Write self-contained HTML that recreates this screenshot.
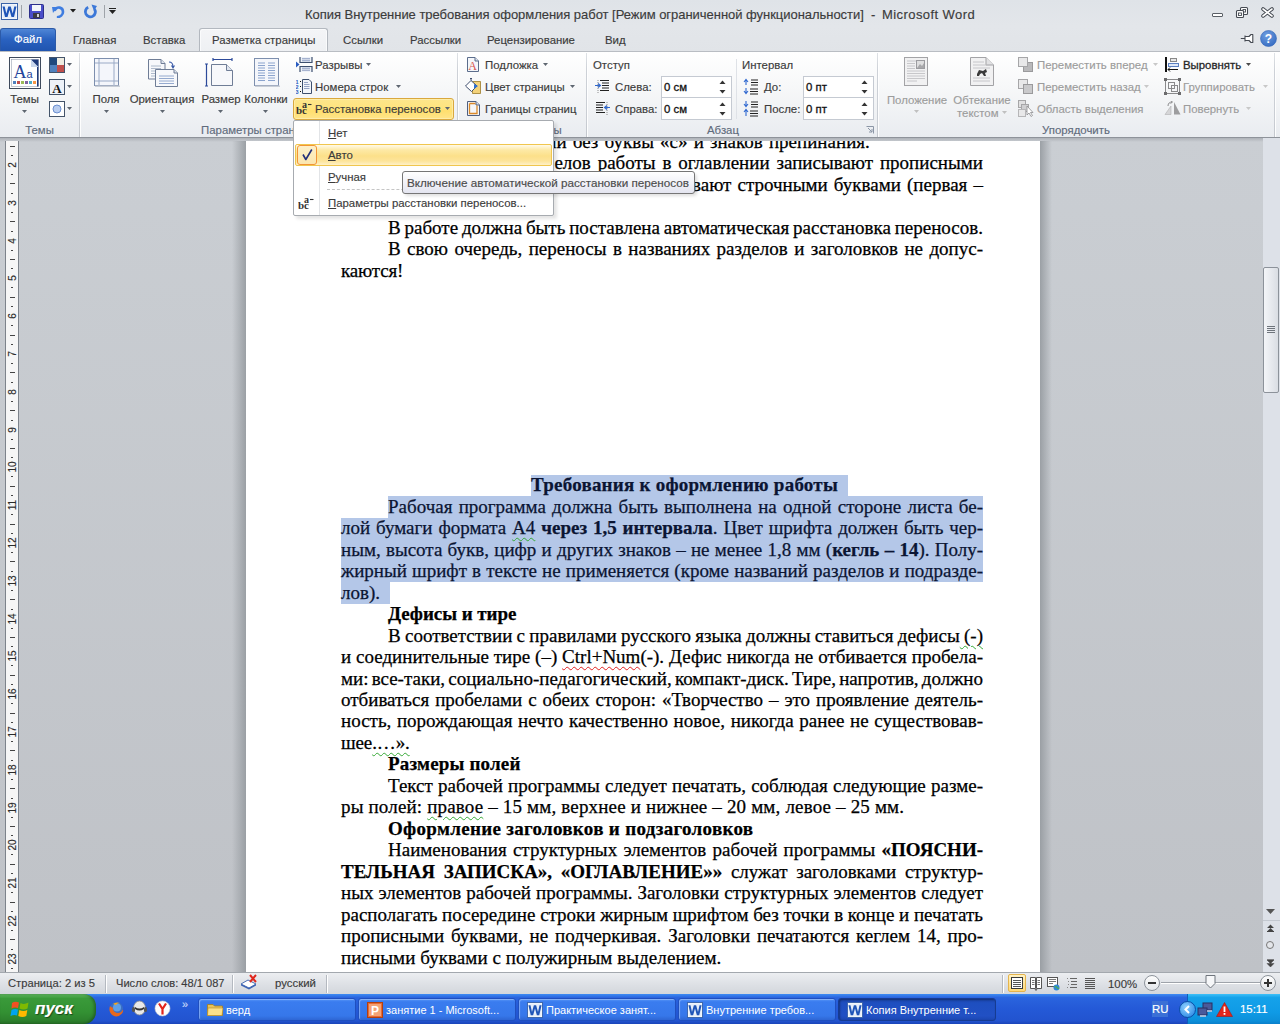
<!DOCTYPE html>
<html><head><meta charset="utf-8">
<style>
*{margin:0;padding:0;box-sizing:border-box}
html,body{width:1280px;height:1024px;overflow:hidden}
body{position:relative;font-family:"Liberation Sans",sans-serif;font-size:12px;color:#3c3c3c;background:#c6c9ce}
.a{position:absolute}
.ui{font-family:"Liberation Sans",sans-serif;white-space:nowrap;-webkit-text-stroke:0.15px currentColor}
.doc{font-family:"Liberation Serif",serif;font-size:19px;color:#000;-webkit-text-stroke:0.25px currentColor;white-space:nowrap}
.ln{position:absolute;height:21.5px;line-height:21.5px;white-space:nowrap;text-align:justify;text-align-last:justify}
u.g{text-decoration:underline wavy #35a935;text-decoration-thickness:1px;text-underline-offset:2.5px}
u.r{text-decoration:underline wavy #e02020;text-decoration-thickness:1px;text-underline-offset:2.5px}
.j{text-align:justify;text-align-last:justify}
.i{padding-left:47px}
b{font-weight:bold}
.sel{background:#b4c7e8}
</style></head><body>

<!-- ============ TITLE BAR + TABS ============ -->
<div class="a" style="left:0;top:0;width:1280px;height:52px;background:linear-gradient(#dfe3e8,#e3e6ea 50%,#e1e4e8)"></div>
<div id="titlebar">
<!-- word icon -->
<svg class="a" style="left:1px;top:3px" width="17" height="17" viewBox="0 0 17 17">
 <rect x="0.5" y="0.5" width="16" height="16" fill="#fff" stroke="#3a63a8"/>
 <rect x="1.5" y="1.5" width="14" height="14" fill="#e6eef9"/>
 <path d="M1.5 3.5L4 14H6.5L8.5 7L10.5 14H13L15.5 3.5H13.3L11.7 10.5L9.7 3.5H7.3L5.3 10.5L3.7 3.5Z" fill="#1f55b8"/>
</svg>
<div class="a" style="left:21px;top:5px;width:1px;height:13px;background:#9ea3a9"></div>
<!-- save -->
<svg class="a" style="left:29px;top:4px" width="15" height="15" viewBox="0 0 15 15">
 <rect x="0.5" y="0.5" width="14" height="14" rx="1" fill="#4a4ec9" stroke="#2d2f8a"/>
 <rect x="3" y="1" width="9" height="6" fill="#f4f6fa"/>
 <rect x="4" y="9" width="7" height="5" fill="#3b3b44"/>
 <rect x="8" y="10" width="2" height="3" fill="#d0d0d8"/>
</svg>
<!-- undo -->
<svg class="a" style="left:51px;top:4px" width="14" height="14" viewBox="0 0 14 14">
 <path d="M4 6 C6 2,12 3,12 8 C12 11,9 13,7 13" fill="none" stroke="#3f7de0" stroke-width="2.6" stroke-linecap="round"/>
 <path d="M1 3 L6 3 L2 9 Z" fill="#3f7de0"/>
</svg>
<svg class="a" style="left:70px;top:9px" width="6" height="4"><path d="M0 0H6L3 3.5Z" fill="#1e1e1e"/></svg>
<!-- redo -->
<svg class="a" style="left:83px;top:4px" width="15" height="15" viewBox="0 0 15 15">
 <path d="M5.2 3.3 A5 5 0 1 0 11.5 5" fill="none" stroke="#3c78d8" stroke-width="2.8"/>
 <path d="M8.5 0.5 L14 2 L11 7 Z" fill="#3c78d8"/>
</svg>
<div class="a" style="left:104px;top:5px;width:1px;height:13px;background:#9ea3a9"></div>
<div class="a" style="left:109px;top:8px;width:7px;height:1px;background:#222"></div>
<svg class="a" style="left:109px;top:10px" width="7" height="5"><path d="M0 0H7L3.5 4Z" fill="#222"/></svg>
<div class="a ui" style="left:305px;top:7px;font-size:13px;color:#3b3b3b;letter-spacing:-0.035px">Копия Внутренние требования оформления работ [Режим ограниченной функциональности]</div>
<div class="a ui" style="left:871px;top:7px;font-size:13px;color:#3b3b3b">-</div>
<div class="a ui" style="left:882px;top:7px;font-size:13px;color:#3b3b3b;letter-spacing:0.42px">Microsoft Word</div>
<!-- window controls -->
<div class="a" style="left:1212px;top:13px;width:11px;height:4px;border:1px solid #5a5f66;border-radius:1px;background:#fff"></div>
<svg class="a" style="left:1235px;top:6px" width="14" height="13" viewBox="0 0 14 13">
 <rect x="5.5" y="1.5" width="7" height="7" rx="1" fill="#fff" stroke="#454a52" stroke-width="1.1"/><rect x="8" y="3.5" width="2.5" height="2.5" fill="none" stroke="#454a52" stroke-width="0.9"/>
 <rect x="1.5" y="4.5" width="7" height="7" rx="1" fill="#fff" stroke="#454a52" stroke-width="1.1"/><rect x="3.5" y="7" width="3" height="2.5" fill="none" stroke="#454a52" stroke-width="0.9"/>
</svg>
<svg class="a" style="left:1261px;top:7px" width="13" height="11" viewBox="0 0 13 11">
 <path d="M2 2 L11 9 M11 2 L2 9" stroke="#454a52" stroke-width="3.6" stroke-linecap="round"/>
 <path d="M2 2 L11 9 M11 2 L2 9" stroke="#fff" stroke-width="1.6" stroke-linecap="round"/>
</svg>
<!-- tabs -->
<div class="a" style="left:0;top:28px;width:56px;height:24px;border-radius:3px 3px 0 0;background:linear-gradient(#4f86d6,#2a62c0 45%,#1f53ad);border:1px solid #2c5aa8;border-bottom:none"></div>
<div class="a ui" style="left:0;top:33px;width:56px;text-align:center;color:#fff;font-size:11.4px">Файл</div>
<div class="a" style="left:199px;top:28px;width:129px;height:24px;border:1px solid #b3b8bf;border-bottom:none;border-radius:3px 3px 0 0;background:linear-gradient(#f4f5f7,#eef0f3);box-shadow:inset 1px 1px 0 #fafbfc,inset -1px 0 0 #fafbfc"></div>
<div class="a ui" style="left:73px;top:34px;color:#3b3b3b;font-size:11.4px">Главная</div>
<div class="a ui" style="left:143px;top:34px;color:#3b3b3b;font-size:11.4px">Вставка</div>
<div class="a ui" style="left:212px;top:34px;color:#3b3b3b;font-size:11.4px">Разметка страницы</div>
<div class="a ui" style="left:343px;top:34px;color:#3b3b3b;font-size:11.4px">Ссылки</div>
<div class="a ui" style="left:410px;top:34px;color:#3b3b3b;font-size:11.4px">Рассылки</div>
<div class="a ui" style="left:487px;top:34px;color:#3b3b3b;font-size:11.4px">Рецензирование</div>
<div class="a ui" style="left:605px;top:34px;color:#3b3b3b;font-size:11.4px">Вид</div>
<!-- pin + help -->
<svg class="a" style="left:1240px;top:33px" width="14" height="11" viewBox="0 0 14 11">
 <path d="M0.8 5.5H5 M5 2.5V8.5 M5 3.5H9L11 1.5H12.8V9.5H11L9 7.5H5Z" fill="#fff" stroke="#454a52" stroke-width="1.1" stroke-linejoin="round"/>
</svg>
<svg class="a" style="left:1260px;top:30px" width="17" height="17" viewBox="0 0 17 17">
 <defs><radialGradient id="hg" cx="40%" cy="30%" r="70%"><stop offset="0" stop-color="#6f9ee0"/><stop offset="1" stop-color="#3a6fc4"/></radialGradient></defs>
 <circle cx="8.5" cy="8.5" r="8" fill="url(#hg)" stroke="#3366b8" stroke-width="0.6"/>
 <text x="8.5" y="13" font-family="Liberation Sans" font-weight="bold" font-size="12" fill="#fff" text-anchor="middle">?</text>
</svg>
</div>

<!-- ============ RIBBON ============ -->
<div class="a" style="left:0;top:51px;width:1280px;height:1px;background:#b9bdc3"></div>
<div class="a" style="left:0;top:52px;width:1280px;height:85px;background:linear-gradient(#ffffff,#f7f8f9 40%,#e9ecf0)"></div>
<div class="a" style="left:0;top:137px;width:1280px;height:1px;background:#8e939a"></div>
<div id="ribbon">
<!-- group separators -->
<div class="a" style="left:79px;top:53px;width:1px;height:84px;background:linear-gradient(#dfe2e6,#cdd1d7 20%,#c9cdd3 80%,#c3c7cd);box-shadow:1px 0 0 rgba(255,255,255,.9)"></div>
<div class="a" style="left:457px;top:53px;width:1px;height:84px;background:linear-gradient(#dfe2e6,#cdd1d7 20%,#c9cdd3 80%,#c3c7cd);box-shadow:1px 0 0 rgba(255,255,255,.9)"></div>
<div class="a" style="left:586px;top:53px;width:1px;height:84px;background:linear-gradient(#dfe2e6,#cdd1d7 20%,#c9cdd3 80%,#c3c7cd);box-shadow:1px 0 0 rgba(255,255,255,.9)"></div>
<div class="a" style="left:877px;top:53px;width:1px;height:84px;background:linear-gradient(#dfe2e6,#cdd1d7 20%,#c9cdd3 80%,#c3c7cd);box-shadow:1px 0 0 rgba(255,255,255,.9)"></div>
<div class="a" style="left:1274px;top:53px;width:1px;height:84px;background:linear-gradient(#dfe2e6,#cdd1d7 20%,#c9cdd3 80%,#c3c7cd);box-shadow:1px 0 0 rgba(255,255,255,.9)"></div>
<!-- group labels -->
<div class="a ui" style="left:0;top:124px;width:79px;text-align:center;color:#5f6b7c;font-size:11.4px">Темы</div>
<div class="a ui" style="left:80px;top:124px;width:357px;text-align:center;color:#5f6b7c;font-size:11.4px">Параметры страницы</div>
<div class="a ui" style="left:460px;top:124px;width:128px;text-align:center;color:#5f6b7c;font-size:11.4px">Фон страницы</div>
<div class="a ui" style="left:587px;top:124px;width:272px;text-align:center;color:#5f6b7c;font-size:11.4px">Абзац</div>
<div class="a ui" style="left:878px;top:124px;width:396px;text-align:center;color:#5f6b7c;font-size:11.4px">Упорядочить</div>
<svg class="a" style="left:866px;top:126px" width="8" height="8" viewBox="0 0 8 8"><path d="M0.5 0.5H7.5V7.5" fill="none" stroke="#8b96a6"/><path d="M2 2L6 6M6 3V6H3" fill="none" stroke="#8b96a6"/></svg>

<!-- ===== Темы ===== -->
<svg class="a" style="left:9px;top:57px" width="32" height="32" viewBox="0 0 32 32">
 <rect x="0.5" y="0.5" width="31" height="31" fill="#fff" stroke="#3e4a5c"/>
 <rect x="2.5" y="2.5" width="27" height="27" fill="#fff" stroke="#9aa4b2" stroke-width="0.6"/>
 <path d="M22 2.5H29.5V29.5H28V10Z" fill="#1e3a7a"/><path d="M22 2.5L29.5 10H22Z" fill="#c8d6ec"/>
 <text x="4.5" y="21" font-family="Liberation Serif" font-size="18" fill="#24449a">A</text>
 <text x="17.5" y="21" font-family="Liberation Sans" font-size="11" fill="#24449a">a</text>
 <rect x="4" y="24" width="3" height="3" fill="#4f81bd"/><rect x="8" y="24" width="3" height="3" fill="#c0504d"/><rect x="12" y="24" width="3" height="3" fill="#9bbb59"/><rect x="16" y="24" width="3" height="3" fill="#8064a2"/><rect x="20" y="24" width="3" height="3" fill="#4bacc6"/><rect x="24" y="24" width="3" height="3" fill="#f79646"/>
</svg>
<div class="a ui" style="left:0;top:93px;width:49px;text-align:center;color:#3b3b3b;font-size:11.4px">Темы</div>
<svg class="a" style="left:22px;top:110px" width="5" height="3"><path d="M0 0H5L2.5 3Z" fill="#5e6670"/></svg>
<svg class="a" style="left:49px;top:57px" width="16" height="16" viewBox="0 0 16 16">
 <rect x="0.5" y="0.5" width="15" height="15" fill="#fff" stroke="#44546a"/>
 <rect x="1" y="1" width="7" height="7" fill="#1f497d"/><rect x="8" y="1" width="7" height="7" fill="#eeece1"/>
 <rect x="1" y="8" width="7" height="7" fill="#4f81bd"/><rect x="8" y="8" width="7" height="7" fill="#c0504d"/>
</svg>
<svg class="a" style="left:67px;top:63px" width="5" height="3"><path d="M0 0H5L2.5 3Z" fill="#5e6670"/></svg>
<svg class="a" style="left:49px;top:79px" width="16" height="16" viewBox="0 0 16 16">
 <rect x="0.5" y="0.5" width="15" height="15" fill="#eef2f8" stroke="#44546a"/>
 <text x="8" y="13.5" font-family="Liberation Serif" font-weight="bold" font-size="13" fill="#111" text-anchor="middle">A</text>
</svg>
<svg class="a" style="left:67px;top:85px" width="5" height="3"><path d="M0 0H5L2.5 3Z" fill="#5e6670"/></svg>
<svg class="a" style="left:49px;top:101px" width="16" height="16" viewBox="0 0 16 16">
 <rect x="0.5" y="0.5" width="15" height="15" fill="#fff" stroke="#44546a"/>
 <circle cx="8" cy="8" r="4" fill="#b9cdf0" stroke="#6b8fd0"/>
</svg>
<svg class="a" style="left:67px;top:107px" width="5" height="3"><path d="M0 0H5L2.5 3Z" fill="#5e6670"/></svg>

<!-- ===== Параметры страницы: big buttons ===== -->
<svg class="a" style="left:94px;top:58px" width="26" height="29" viewBox="0 0 26 29">
 <rect x="0.5" y="0.5" width="24" height="27" fill="#f4f6fb" stroke="#7d8fae"/>
 <path d="M5 1V28M20 1V28M1 5H24M1 23H24" stroke="#9aaac6" stroke-width="1"/>
 <rect x="1" y="27.5" width="25" height="1.5" fill="#c9ced6"/>
</svg>
<div class="a ui" style="left:88px;top:93px;width:36px;text-align:center;color:#3b3b3b;font-size:11.4px">Поля</div>
<svg class="a" style="left:104px;top:110px" width="5" height="3"><path d="M0 0H5L2.5 3Z" fill="#5e6670"/></svg>

<svg class="a" style="left:148px;top:59px" width="30" height="28" viewBox="0 0 30 28">
 <path d="M0.5 0.5H13L17 4.5V20H0.5Z" fill="#f7f8fb" stroke="#6f7d96"/><path d="M13 0.5V4.5H17" fill="#dfe5ef" stroke="#6f7d96"/>
 <path d="M3 7H13M3 9.5H13M3 12H13M3 14.5H13M3 17H13" stroke="#9aa8bf" stroke-width="0.8"/>
 <path d="M7.5 10.5H26L29.5 14V27.5H7.5Z" fill="#f7f8fb" stroke="#6f7d96"/><path d="M26 10.5V14H29.5" fill="#dfe5ef" stroke="#6f7d96"/>
 <path d="M11 17H26M11 19.5H26M11 22H26M11 24.5H26" stroke="#7b96c4" stroke-width="0.8"/>
 <path d="M21 3C24 3,25 5,25 8M23.5 6.5L25 9L26.5 6.5" fill="none" stroke="#3a5aa8" stroke-width="1.1"/>
</svg>
<div class="a ui" style="left:126px;top:93px;width:72px;text-align:center;color:#3b3b3b;font-size:11.4px">Ориентация</div>
<svg class="a" style="left:160px;top:110px" width="5" height="3"><path d="M0 0H5L2.5 3Z" fill="#5e6670"/></svg>

<svg class="a" style="left:205px;top:58px" width="30" height="29" viewBox="0 0 30 29">
 <path d="M8 1.5H27M8 0V3M27 0V3" stroke="#2c4a9a" stroke-width="1.2"/>
 <path d="M1.5 6V28M0 6H3M0 28H3" stroke="#2c4a9a" stroke-width="1.2"/>
 <path d="M6.5 6.5H21.5L27.5 12.5V27.5H6.5Z" fill="#f7f8fb" stroke="#6f7d96"/><path d="M21.5 6.5V12.5H27.5" fill="#dfe5ef" stroke="#6f7d96"/>
</svg>
<div class="a ui" style="left:199px;top:93px;width:44px;text-align:center;color:#3b3b3b;font-size:11.4px">Размер</div>
<svg class="a" style="left:218px;top:110px" width="5" height="3"><path d="M0 0H5L2.5 3Z" fill="#5e6670"/></svg>

<svg class="a" style="left:254px;top:58px" width="26" height="29" viewBox="0 0 26 29">
 <rect x="0.5" y="0.5" width="24" height="27" fill="#f4f6fb" stroke="#7d8fae"/>
 <path d="M4 5H11M4 7.5H11M4 10H11M4 12.5H11M4 15H11M4 17.5H11M4 20H11M4 22.5H11M14 5H21M14 7.5H21M14 10H21M14 12.5H21M14 15H21M14 17.5H21M14 20H21M14 22.5H21" stroke="#7f9bc8" stroke-width="0.9"/>
 <rect x="1" y="27.5" width="25" height="1.5" fill="#c9ced6"/>
</svg>
<div class="a ui" style="left:240px;top:93px;width:52px;text-align:center;color:#3b3b3b;font-size:11.4px">Колонки</div>
<svg class="a" style="left:263px;top:110px" width="5" height="3"><path d="M0 0H5L2.5 3Z" fill="#5e6670"/></svg>

<!-- small buttons -->
<svg class="a" style="left:296px;top:57px" width="17" height="15" viewBox="0 0 17 15">
 <path d="M4 0V5.5H16V0" fill="#eef2f8" stroke="#3d4f6e" stroke-width="1.2"/>
 <path d="M6 1.8H14M6 3.8H14" stroke="#7d8fb8" stroke-width="0.9"/>
 <path d="M4 15V9.5H16V15" fill="#eef2f8" stroke="#3d4f6e" stroke-width="1.2"/>
 <path d="M6 11.2H14M6 13.2H14" stroke="#7d8fb8" stroke-width="0.9"/>
 <path d="M0 4.5L3.5 7.5L0 10.5Z" fill="#2a5cc0"/>
</svg>
<div class="a ui" style="left:315px;top:59px;color:#3b3b3b;font-size:11.4px">Разрывы</div>
<svg class="a" style="left:366px;top:63px" width="5" height="3"><path d="M0 0H5L2.5 3Z" fill="#5e6670"/></svg>
<svg class="a" style="left:296px;top:79px" width="17" height="15" viewBox="0 0 17 15">
 <text x="-0.5" y="5" font-family="Liberation Sans" font-weight="bold" font-size="5.5" fill="#2a5cc0">1</text><text x="-0.5" y="10" font-family="Liberation Sans" font-weight="bold" font-size="5.5" fill="#2a5cc0">2</text><text x="-0.5" y="15" font-family="Liberation Sans" font-weight="bold" font-size="5.5" fill="#2a5cc0">3</text>
 <rect x="4" y="2" width="1" height="1" fill="#111"/><rect x="4" y="7" width="1" height="1" fill="#111"/><rect x="4" y="12" width="1" height="1" fill="#111"/>
 <path d="M6.5 0.5H13L15.5 3V14.5H6.5Z" fill="#f2f5fa" stroke="#3d4f6e"/>
 <path d="M8 3.5H12M8 5.5H13.5M8 7.5H13.5M8 9.5H13.5" stroke="#7d8fb8" stroke-width="0.8"/>
</svg>
<div class="a ui" style="left:315px;top:81px;color:#3b3b3b;font-size:11.4px">Номера строк</div>
<svg class="a" style="left:396px;top:85px" width="5" height="3"><path d="M0 0H5L2.5 3Z" fill="#5e6670"/></svg>

<!-- highlighted hyphenation button -->
<div class="a" style="left:293px;top:98px;width:161px;height:22px;border:1px solid #d9a83e;border-radius:3px;background:linear-gradient(#fde68c,#ffe47e 45%,#ffdf6e 60%,#ffe58a);box-shadow:inset 0 0 0 1px rgba(255,245,200,.5)"></div>
<svg class="a" style="left:296px;top:100px" width="17" height="16" viewBox="0 0 17 16"><text x="0" y="13.5" font-family="Liberation Serif" font-weight="bold" font-size="11" fill="#333">b</text><text x="6" y="13.5" font-family="Liberation Serif" font-weight="bold" font-size="11" fill="#333">c</text><text x="6" y="7.5" font-family="Liberation Serif" font-weight="bold" font-size="10" fill="#333">a</text><path d="M12 4.5H15.5" stroke="#333" stroke-width="1.1"/></svg>
<div class="a ui" style="left:315px;top:103px;color:#3b3b3b;font-size:11.4px">Расстановка переносов</div>
<svg class="a" style="left:445px;top:107px" width="5" height="3"><path d="M0 0H5L2.5 3Z" fill="#5e6670"/></svg>

<!-- ===== Фон страницы ===== -->
<svg class="a" style="left:467px;top:57px" width="12" height="15" viewBox="0 0 12 15">
 <path d="M0.5 0.5H8L11.5 4V14.5H0.5Z" fill="#f4f6fa" stroke="#5b6d8c"/><path d="M8 0.5V4H11.5" fill="#dde3ee" stroke="#5b6d8c"/>
 <text x="5.5" y="12.5" font-family="Liberation Serif" font-size="12" fill="#d9534f" text-anchor="middle">A</text>
</svg>
<div class="a ui" style="left:485px;top:59px;color:#3b3b3b;font-size:11.4px">Подложка</div>
<svg class="a" style="left:543px;top:63px" width="5" height="3"><path d="M0 0H5L2.5 3Z" fill="#5e6670"/></svg>
<svg class="a" style="left:465px;top:78px" width="17" height="16" viewBox="0 0 17 16">
 <path d="M7.5 3.5H15.5V15.5H7.5Z" fill="#f3d27a" stroke="#9a7a2a" stroke-width="0.8"/>
 <path d="M0.5 8 L6 2.5 L12 8 L6.5 13.5 Z" fill="#fff" stroke="#3f4e6e" stroke-width="1"/>
 <path d="M6 2.5V0.5M5 0.5H7" stroke="#3f4e6e"/>
 <path d="M9 6 L13 8 L9 11" fill="#2e6fd0"/>
</svg>
<div class="a ui" style="left:485px;top:81px;color:#3b3b3b;font-size:11.4px">Цвет страницы</div>
<svg class="a" style="left:570px;top:85px" width="5" height="3"><path d="M0 0H5L2.5 3Z" fill="#5e6670"/></svg>
<svg class="a" style="left:467px;top:101px" width="13" height="15" viewBox="0 0 13 15">
 <path d="M0.5 0.5H9L12.5 4V14.5H0.5Z" fill="#f4f6fa" stroke="#4e5f80"/><path d="M9 0.5V4H12.5" fill="#dde3ee" stroke="#4e5f80"/>
 <path d="M2.5 2.5H8.5M10 4.5V12.5H2.5V2.5" fill="none" stroke="#d9892a" stroke-width="1.3"/>
</svg>
<div class="a ui" style="left:485px;top:103px;color:#3b3b3b;font-size:11.4px">Границы страниц</div>

<!-- ===== Абзац ===== -->
<div class="a ui" style="left:593px;top:59px;color:#3b3b3b;font-size:11.4px">Отступ</div>
<div class="a ui" style="left:742px;top:59px;color:#3b3b3b;font-size:11.4px">Интервал</div>
<div class="a" style="left:736px;top:59px;width:1px;height:60px;background:#dfe2e7"></div>
<svg class="a" style="left:595px;top:79px" width="15" height="15" viewBox="0 0 15 15">
 <path d="M5 1.5H14M7 4H14M7 6.5H14M7 9H14M5 11.5H14" stroke="#222" stroke-width="1.1"/>
 <path d="M0 6.5H5M3 4.5L5.5 6.5L3 8.5" fill="none" stroke="#2f68d0" stroke-width="1.1"/>
 <path d="M3 1V14" stroke="#444" stroke-width="0.6" stroke-dasharray="1 1"/>
</svg>
<div class="a ui" style="left:615px;top:81px;color:#3b3b3b;font-size:11.4px">Слева:</div>
<svg class="a" style="left:595px;top:101px" width="15" height="15" viewBox="0 0 15 15">
 <path d="M1 1.5H10M1 4H8M1 6.5H8M1 9H8M1 11.5H10" stroke="#222" stroke-width="1.1"/>
 <path d="M15 6.5H10M12 4.5L9.5 6.5L12 8.5" fill="none" stroke="#2f68d0" stroke-width="1.1"/>
 <path d="M12 1V14" stroke="#444" stroke-width="0.6" stroke-dasharray="1 1"/>
</svg>
<div class="a ui" style="left:615px;top:103px;color:#3b3b3b;font-size:11.4px">Справа:</div>
<div class="a" style="left:661px;top:76px;width:71px;height:22px;border:1px solid #c5cad2;background:#fff"></div>
<div class="a" style="left:661px;top:98px;width:71px;height:22px;border:1px solid #c5cad2;border-top:none;background:#fff"></div>
<div class="a ui" style="left:664px;top:81px;color:#111;font-size:11.4px;-webkit-text-stroke:0.3px #111">0 см</div>
<div class="a ui" style="left:664px;top:103px;color:#111;font-size:11.4px;-webkit-text-stroke:0.3px #111">0 см</div>
<div class="a" style="left:803px;top:76px;width:71px;height:22px;border:1px solid #c5cad2;background:#fff"></div>
<div class="a" style="left:803px;top:98px;width:71px;height:22px;border:1px solid #c5cad2;border-top:none;background:#fff"></div>
<div class="a ui" style="left:806px;top:81px;color:#111;font-size:11.4px;-webkit-text-stroke:0.3px #111">0 пт</div>
<div class="a ui" style="left:806px;top:103px;color:#111;font-size:11.4px;-webkit-text-stroke:0.3px #111">0 пт</div>
<svg class="a" style="left:719px;top:80px" width="7" height="14"><path d="M0.5 4L3.5 0.5L6.5 4Z" fill="#333"/><path d="M0.5 10L3.5 13.5L6.5 10Z" fill="#333"/></svg>
<svg class="a" style="left:719px;top:102px" width="7" height="14"><path d="M0.5 4L3.5 0.5L6.5 4Z" fill="#333"/><path d="M0.5 10L3.5 13.5L6.5 10Z" fill="#333"/></svg>
<svg class="a" style="left:861px;top:80px" width="7" height="14"><path d="M0.5 4L3.5 0.5L6.5 4Z" fill="#333"/><path d="M0.5 10L3.5 13.5L6.5 10Z" fill="#333"/></svg>
<svg class="a" style="left:861px;top:102px" width="7" height="14"><path d="M0.5 4L3.5 0.5L6.5 4Z" fill="#333"/><path d="M0.5 10L3.5 13.5L6.5 10Z" fill="#333"/></svg>
<svg class="a" style="left:743px;top:78px" width="16" height="17" viewBox="0 0 16 17">
 <path d="M3 2V7M1 4L3 1.5L5 4" fill="none" stroke="#2f68d0" stroke-width="1.1"/>
 <path d="M3 10V15M1 13L3 15.5L5 13" fill="none" stroke="#2f68d0" stroke-width="1.1"/>
 <path d="M8 2H15M8 4.5H15M8 7H15M7 11H15M7 13.5H15M7 16H15" stroke="#222" stroke-width="1.1"/>
</svg>
<div class="a ui" style="left:764px;top:81px;color:#3b3b3b;font-size:11.4px">До:</div>
<svg class="a" style="left:743px;top:100px" width="16" height="17" viewBox="0 0 16 17">
 <path d="M3 1V6M1 4L3 6.5L5 4" fill="none" stroke="#2f68d0" stroke-width="1.1"/>
 <path d="M3 10V16M1 12L3 9.5L5 12" fill="none" stroke="#2f68d0" stroke-width="1.1"/>
 <path d="M8 2H15M8 4.5H15M8 7H15M7 11H15M7 13.5H15M7 16H15" stroke="#222" stroke-width="1.1"/>
</svg>
<div class="a ui" style="left:764px;top:103px;color:#3b3b3b;font-size:11.4px">После:</div>

<!-- ===== Упорядочить ===== -->
<svg class="a" style="left:904px;top:57px" width="24" height="30" viewBox="0 0 24 30">
 <rect x="0.5" y="0.5" width="23" height="28" fill="#f1f1f2" stroke="#a3a3a6"/>
 <path d="M3 4H21M3 6.5H11M3 9H11M3 11.5H11M3 14H21M3 16.5H21M3 19H21M3 21.5H21M3 24H13" stroke="#c2c2c5" stroke-width="0.9"/>
 <rect x="12.5" y="3.5" width="8" height="8" fill="#dededf" stroke="#9c9ca0"/>
 <path d="M13 11L16 7L18 9L20 6V11Z" fill="#a8a8ab"/>
</svg>
<div class="a ui" style="left:884px;top:94px;width:66px;text-align:center;color:#9c9c9c;font-size:11.4px">Положение</div>
<svg class="a" style="left:914px;top:110px" width="5" height="3"><path d="M0 0H5L2.5 3Z" fill="#c0c0c0"/></svg>
<svg class="a" style="left:970px;top:57px" width="24" height="30" viewBox="0 0 24 30">
 <path d="M0.5 0.5H16L23.5 8V28.5H0.5Z" fill="#f1f1f2" stroke="#a3a3a6"/><path d="M16 0.5V8H23.5" fill="#e2e2e4" stroke="#a3a3a6"/>
 <path d="M3 5H14M3 8H20M3 11H20M3 21H20M3 24H20" stroke="#c2c2c5" stroke-width="0.9"/>
 <path d="M7 17L9 13L13 14L16 12L17 15L15 16L16 19L14 19L12 16L10 17L9 19L7 19Z" fill="#3a3a3a"/>
</svg>
<div class="a ui" style="left:951px;top:94px;width:62px;text-align:center;color:#9c9c9c;font-size:11.4px">Обтекание</div>
<div class="a ui" style="left:957px;top:107px;color:#9c9c9c;font-size:11.4px">текстом</div>
<svg class="a" style="left:1002px;top:111px" width="5" height="3"><path d="M0 0H5L2.5 3Z" fill="#c0c0c0"/></svg>

<svg class="a" style="left:1018px;top:57px" width="15" height="15" viewBox="0 0 15 15">
 <rect x="5.5" y="5.5" width="9" height="9" fill="#b9b9bb" stroke="#9a9a9c"/>
 <rect x="0.5" y="0.5" width="9" height="9" fill="#e8e8e9" stroke="#a6a6a8"/>
</svg>
<div class="a ui" style="left:1037px;top:59px;color:#9c9c9c;font-size:11.4px">Переместить вперед</div>
<svg class="a" style="left:1153px;top:63px" width="5" height="3"><path d="M0 0H5L2.5 3Z" fill="#c8c8c8"/></svg>
<svg class="a" style="left:1018px;top:79px" width="15" height="15" viewBox="0 0 15 15">
 <rect x="0.5" y="0.5" width="9" height="9" fill="#e8e8e9" stroke="#a6a6a8"/>
 <rect x="5.5" y="5.5" width="9" height="9" fill="#c9c9cb" stroke="#9a9a9c"/>
</svg>
<div class="a ui" style="left:1037px;top:81px;color:#9c9c9c;font-size:11.4px">Переместить назад</div>
<svg class="a" style="left:1144px;top:85px" width="5" height="3"><path d="M0 0H5L2.5 3Z" fill="#c8c8c8"/></svg>
<svg class="a" style="left:1018px;top:100px" width="17" height="17" viewBox="0 0 17 17">
 <rect x="0.5" y="0.5" width="7" height="7" fill="#e0e0e1" stroke="#a6a6a8"/>
 <rect x="3.5" y="4.5" width="7" height="7" fill="#cfcfd1" stroke="#a6a6a8"/>
 <rect x="0.5" y="9.5" width="7" height="7" fill="#e8e8e9" stroke="#b6b6b8"/>
 <path d="M9 6V15L11 13L13 16.5L14.5 15.5L12.5 12.5H15Z" fill="#fff" stroke="#8c8c8e" stroke-width="0.8"/>
</svg>
<div class="a ui" style="left:1037px;top:103px;color:#9c9c9c;font-size:11.4px">Область выделения</div>

<svg class="a" style="left:1165px;top:57px" width="14" height="15" viewBox="0 0 14 15">
 <path d="M1 0V15" stroke="#111" stroke-width="2"/>
 <rect x="5.5" y="1.5" width="6" height="3" fill="#e8e8e8" stroke="#888"/>
 <rect x="3.5" y="6.5" width="10" height="3" fill="#dfe8f6" stroke="#5b7fc0"/>
 <path d="M3 12.5H13M5 10.5L3 12.5L5 14.5" fill="none" stroke="#111" stroke-width="1"/>
</svg>
<div class="a ui" style="left:1183px;top:59px;color:#262626;font-size:11.4px;-webkit-text-stroke:0.3px #262626">Выровнять</div>
<svg class="a" style="left:1246px;top:63px" width="5" height="3"><path d="M0 0H5L2.5 3Z" fill="#4a4a4a"/></svg>
<svg class="a" style="left:1164px;top:78px" width="17" height="17" viewBox="0 0 17 17">
 <rect x="1.5" y="1.5" width="14" height="14" fill="none" stroke="#8a8a8c" stroke-width="1"/>
 <rect x="4.5" y="4.5" width="6" height="6" fill="none" stroke="#8a8a8c"/><rect x="7.5" y="7.5" width="6" height="6" fill="none" stroke="#8a8a8c"/>
 <rect x="0" y="0" width="3" height="3" fill="#6b6b6d"/><rect x="14" y="0" width="3" height="3" fill="#6b6b6d"/><rect x="0" y="14" width="3" height="3" fill="#6b6b6d"/><rect x="14" y="14" width="3" height="3" fill="#6b6b6d"/>
</svg>
<div class="a ui" style="left:1183px;top:81px;color:#9c9c9c;font-size:11.4px">Группировать</div>
<svg class="a" style="left:1263px;top:85px" width="5" height="3"><path d="M0 0H5L2.5 3Z" fill="#c8c8c8"/></svg>
<svg class="a" style="left:1164px;top:101px" width="17" height="14" viewBox="0 0 17 14">
 <path d="M1 13.5L7 5V13.5Z" fill="#d6d6d8" stroke="#b0b0b2" stroke-width="0.6"/>
 <path d="M10 13.5V1L16.5 13.5Z" fill="#9d9d9f"/>
 <path d="M4 5C4 2,6 1,8 1M6.5 -0.5L8.5 1L6.5 2.5" fill="none" stroke="#8a8a8c"/>
</svg>
<div class="a ui" style="left:1183px;top:103px;color:#9c9c9c;font-size:11.4px">Повернуть</div>
<svg class="a" style="left:1246px;top:107px" width="5" height="3"><path d="M0 0H5L2.5 3Z" fill="#c8c8c8"/></svg>
</div>

<!-- ============ DOCUMENT AREA ============ -->
<div class="a" style="left:0;top:138px;width:1263px;height:834px;background:linear-gradient(#caced3,#bfc2c7)"></div>
<div class="a" style="left:0;top:138px;width:1263px;height:4px;background:linear-gradient(#aeb2b8,rgba(200,204,209,0))"></div>
<!-- page shadow -->
<div class="a" style="left:232px;top:141px;width:14px;height:831px;background:linear-gradient(90deg,rgba(150,155,160,0),rgba(150,155,160,.9))"></div>
<div class="a" style="left:1040px;top:141px;width:12px;height:831px;background:linear-gradient(90deg,rgba(150,155,160,.9),rgba(150,155,160,0))"></div>
<!-- page -->
<div class="a" style="left:246px;top:141px;width:794px;height:831px;background:#fff;overflow:hidden">
  <div class="doc" style="position:absolute;left:-246px;top:-141px;width:1280px;height:1024px">
    <!--DOC-->
<div class="a sel" style="left:531px;top:475px;width:317px;height:21px"></div>
<div class="a sel" style="left:388px;top:496px;width:595px;height:22px"></div>
<div class="a sel" style="left:341px;top:518px;width:642px;height:64px"></div>
<div class="a sel" style="left:341px;top:582px;width:49px;height:22px"></div>
<div class="ln" style="left:547px;top:131px;width:322.8px;">ли без буквы «с» и знаков препинания.</div>
<div class="ln" style="left:554.4px;top:152px;width:428.6px;">елов работы в оглавлении записывают прописными</div>
<div class="ln" style="left:692px;top:174px;width:291.0px;">вают строчными буквами (первая –</div>
<div class="ln" style="left:388px;top:217px;width:595.0px;word-spacing:-0.91px;">В работе должна быть поставлена автоматическая расстановка переносов.</div>
<div class="ln" style="left:388px;top:238px;width:595.0px;">В свою очередь, переносы в названиях разделов и заголовков не допус-</div>
<div class="ln" style="left:341px;top:260px;width:62.1px;letter-spacing:-0.180px;text-align:left;text-align-last:left;">каются!</div>
<div class="ln" style="left:531px;top:474px;width:307.0px;letter-spacing:0.234px;text-align:left;text-align-last:left;color:#0b1533;"><b>Требования к оформлению работы</b></div>
<div class="ln" style="left:388px;top:496px;width:595.0px;color:#0b1533;">Рабочая программа должна быть выполнена на одной стороне листа бе-</div>
<div class="ln" style="left:341px;top:517px;width:642.0px;color:#0b1533;">лой бумаги формата <u class="g">А4</u> <b>через 1,5 интервала</b>. Цвет шрифта должен быть чер-</div>
<div class="ln" style="left:341px;top:539px;width:642.0px;color:#0b1533;">ным, высота букв, цифр и других знаков – не менее 1,8 мм (<b>кегль – 14</b>). Полу-</div>
<div class="ln" style="left:341px;top:560px;width:642.0px;color:#0b1533;">жирный шрифт в тексте не применяется (кроме названий разделов и подразде-</div>
<div class="ln" style="left:341px;top:582px;width:39.0px;letter-spacing:-0.006px;text-align:left;text-align-last:left;color:#0b1533;">лов).</div>
<div class="ln" style="left:388px;top:603px;width:128.3px;letter-spacing:-0.059px;text-align:left;text-align-last:left;"><b>Дефисы и тире</b></div>
<div class="ln" style="left:388px;top:625px;width:595.0px;word-spacing:-0.48px;">В соответствии с правилами русского языка должны ставиться дефисы<u class="g"> (-)</u></div>
<div class="ln" style="left:341px;top:646px;width:642.0px;">и соединительные тире (–) <u class="r">Ctrl+Num</u>(-). Дефис никогда не отбивается пробела-</div>
<div class="ln" style="left:341px;top:668px;width:642.0px;word-spacing:-1.56px;">ми: все-таки, социально-педагогический, компакт-диск. Тире, напротив, должно</div>
<div class="ln" style="left:341px;top:689px;width:642.0px;">отбиваться пробелами с обеих сторон: «Творчество – это проявление деятель-</div>
<div class="ln" style="left:341px;top:710px;width:642.0px;">ность, порождающая нечто качественно новое, никогда ранее не существовав-</div>
<div class="ln" style="left:341px;top:732px;width:68.7px;letter-spacing:-0.114px;text-align:left;text-align-last:left;">шее<u class="g">.…».</u></div>
<div class="ln" style="left:388px;top:753px;width:132.6px;letter-spacing:0.181px;text-align:left;text-align-last:left;"><b>Размеры полей</b></div>
<div class="ln" style="left:388px;top:775px;width:595.0px;">Текст рабочей программы следует печатать, соблюдая следующие разме-</div>
<div class="ln" style="left:341px;top:796px;width:563.2px;letter-spacing:0.166px;text-align:left;text-align-last:left;">ры полей: <u class="g">правое</u> – 15 мм, верхнее и нижнее – 20 мм, левое – 25 мм.</div>
<div class="ln" style="left:388px;top:818px;width:365.4px;letter-spacing:0.309px;text-align:left;text-align-last:left;"><b>Оформление заголовков и подзаголовков</b></div>
<div class="ln" style="left:388px;top:839px;width:595.0px;">Наименования структурных элементов рабочей программы <b>«ПОЯСНИ-</b></div>
<div class="ln" style="left:341px;top:861px;width:642.0px;"><b>ТЕЛЬНАЯ ЗАПИСКА», «ОГЛАВЛЕНИЕ»»</b> служат заголовками структур-</div>
<div class="ln" style="left:341px;top:882px;width:642.0px;">ных элементов рабочей программы. Заголовки структурных элементов следует</div>
<div class="ln" style="left:341px;top:904px;width:642.0px;word-spacing:-0.06px;">располагать посередине строки жирным шрифтом без точки в конце и печатать</div>
<div class="ln" style="left:341px;top:925px;width:642.0px;">прописными буквами, не подчеркивая. Заголовки печатаются кеглем 14, про-</div>
<div class="ln" style="left:341px;top:947px;width:380.3px;letter-spacing:0.069px;text-align:left;text-align-last:left;">писными буквами с полужирным выделением.</div>
<!--/DOC--></div>
  </div>
</div>

<!-- ruler -->
<div class="a" style="left:5px;top:141px;width:14px;height:831px;background:#f6f6f6;border-left:1px solid #7d838b;border-right:1px solid #7d838b"></div>
<div id="ruler"><div class="a ui" style="left:6px;top:161.0px;width:14px;height:8px;line-height:8px;text-align:center;font-size:10px;color:#2a2a2a"><span style="display:inline-block;transform:rotate(-90deg)">2</span></div>
<div class="a" style="left:10px;top:145.6px;width:5px;height:1px;background:#444"></div>
<div class="a" style="left:11px;top:155.1px;width:2px;height:1px;background:#444"></div>
<div class="a" style="left:11px;top:173.9px;width:2px;height:1px;background:#444"></div>
<div class="a ui" style="left:6px;top:198.8px;width:14px;height:8px;line-height:8px;text-align:center;font-size:10px;color:#2a2a2a"><span style="display:inline-block;transform:rotate(-90deg)">3</span></div>
<div class="a" style="left:10px;top:183.4px;width:5px;height:1px;background:#444"></div>
<div class="a" style="left:11px;top:192.9px;width:2px;height:1px;background:#444"></div>
<div class="a" style="left:11px;top:211.8px;width:2px;height:1px;background:#444"></div>
<div class="a ui" style="left:6px;top:236.6px;width:14px;height:8px;line-height:8px;text-align:center;font-size:10px;color:#2a2a2a"><span style="display:inline-block;transform:rotate(-90deg)">4</span></div>
<div class="a" style="left:10px;top:221.2px;width:5px;height:1px;background:#444"></div>
<div class="a" style="left:11px;top:230.7px;width:2px;height:1px;background:#444"></div>
<div class="a" style="left:11px;top:249.5px;width:2px;height:1px;background:#444"></div>
<div class="a ui" style="left:6px;top:274.4px;width:14px;height:8px;line-height:8px;text-align:center;font-size:10px;color:#2a2a2a"><span style="display:inline-block;transform:rotate(-90deg)">5</span></div>
<div class="a" style="left:10px;top:259.0px;width:5px;height:1px;background:#444"></div>
<div class="a" style="left:11px;top:268.4px;width:2px;height:1px;background:#444"></div>
<div class="a" style="left:11px;top:287.3px;width:2px;height:1px;background:#444"></div>
<div class="a ui" style="left:6px;top:312.2px;width:14px;height:8px;line-height:8px;text-align:center;font-size:10px;color:#2a2a2a"><span style="display:inline-block;transform:rotate(-90deg)">6</span></div>
<div class="a" style="left:10px;top:296.8px;width:5px;height:1px;background:#444"></div>
<div class="a" style="left:11px;top:306.2px;width:2px;height:1px;background:#444"></div>
<div class="a" style="left:11px;top:325.1px;width:2px;height:1px;background:#444"></div>
<div class="a ui" style="left:6px;top:350.0px;width:14px;height:8px;line-height:8px;text-align:center;font-size:10px;color:#2a2a2a"><span style="display:inline-block;transform:rotate(-90deg)">7</span></div>
<div class="a" style="left:10px;top:334.6px;width:5px;height:1px;background:#444"></div>
<div class="a" style="left:11px;top:344.1px;width:2px;height:1px;background:#444"></div>
<div class="a" style="left:11px;top:362.9px;width:2px;height:1px;background:#444"></div>
<div class="a ui" style="left:6px;top:387.8px;width:14px;height:8px;line-height:8px;text-align:center;font-size:10px;color:#2a2a2a"><span style="display:inline-block;transform:rotate(-90deg)">8</span></div>
<div class="a" style="left:10px;top:372.4px;width:5px;height:1px;background:#444"></div>
<div class="a" style="left:11px;top:381.8px;width:2px;height:1px;background:#444"></div>
<div class="a" style="left:11px;top:400.7px;width:2px;height:1px;background:#444"></div>
<div class="a ui" style="left:6px;top:425.6px;width:14px;height:8px;line-height:8px;text-align:center;font-size:10px;color:#2a2a2a"><span style="display:inline-block;transform:rotate(-90deg)">9</span></div>
<div class="a" style="left:10px;top:410.2px;width:5px;height:1px;background:#444"></div>
<div class="a" style="left:11px;top:419.6px;width:2px;height:1px;background:#444"></div>
<div class="a" style="left:11px;top:438.5px;width:2px;height:1px;background:#444"></div>
<div class="a ui" style="left:6px;top:463.4px;width:14px;height:8px;line-height:8px;text-align:center;font-size:10px;color:#2a2a2a"><span style="display:inline-block;transform:rotate(-90deg)">10</span></div>
<div class="a" style="left:10px;top:448.0px;width:5px;height:1px;background:#444"></div>
<div class="a" style="left:11px;top:457.4px;width:2px;height:1px;background:#444"></div>
<div class="a" style="left:11px;top:476.3px;width:2px;height:1px;background:#444"></div>
<div class="a ui" style="left:6px;top:501.2px;width:14px;height:8px;line-height:8px;text-align:center;font-size:10px;color:#2a2a2a"><span style="display:inline-block;transform:rotate(-90deg)">11</span></div>
<div class="a" style="left:10px;top:485.8px;width:5px;height:1px;background:#444"></div>
<div class="a" style="left:11px;top:495.2px;width:2px;height:1px;background:#444"></div>
<div class="a" style="left:11px;top:514.1px;width:2px;height:1px;background:#444"></div>
<div class="a ui" style="left:6px;top:539.0px;width:14px;height:8px;line-height:8px;text-align:center;font-size:10px;color:#2a2a2a"><span style="display:inline-block;transform:rotate(-90deg)">12</span></div>
<div class="a" style="left:10px;top:523.6px;width:5px;height:1px;background:#444"></div>
<div class="a" style="left:11px;top:533.0px;width:2px;height:1px;background:#444"></div>
<div class="a" style="left:11px;top:552.0px;width:2px;height:1px;background:#444"></div>
<div class="a ui" style="left:6px;top:576.8px;width:14px;height:8px;line-height:8px;text-align:center;font-size:10px;color:#2a2a2a"><span style="display:inline-block;transform:rotate(-90deg)">13</span></div>
<div class="a" style="left:10px;top:561.4px;width:5px;height:1px;background:#444"></div>
<div class="a" style="left:11px;top:570.8px;width:2px;height:1px;background:#444"></div>
<div class="a" style="left:11px;top:589.8px;width:2px;height:1px;background:#444"></div>
<div class="a ui" style="left:6px;top:614.6px;width:14px;height:8px;line-height:8px;text-align:center;font-size:10px;color:#2a2a2a"><span style="display:inline-block;transform:rotate(-90deg)">14</span></div>
<div class="a" style="left:10px;top:599.2px;width:5px;height:1px;background:#444"></div>
<div class="a" style="left:11px;top:608.6px;width:2px;height:1px;background:#444"></div>
<div class="a" style="left:11px;top:627.5px;width:2px;height:1px;background:#444"></div>
<div class="a ui" style="left:6px;top:652.4px;width:14px;height:8px;line-height:8px;text-align:center;font-size:10px;color:#2a2a2a"><span style="display:inline-block;transform:rotate(-90deg)">15</span></div>
<div class="a" style="left:10px;top:637.0px;width:5px;height:1px;background:#444"></div>
<div class="a" style="left:11px;top:646.4px;width:2px;height:1px;background:#444"></div>
<div class="a" style="left:11px;top:665.4px;width:2px;height:1px;background:#444"></div>
<div class="a ui" style="left:6px;top:690.2px;width:14px;height:8px;line-height:8px;text-align:center;font-size:10px;color:#2a2a2a"><span style="display:inline-block;transform:rotate(-90deg)">16</span></div>
<div class="a" style="left:10px;top:674.8px;width:5px;height:1px;background:#444"></div>
<div class="a" style="left:11px;top:684.2px;width:2px;height:1px;background:#444"></div>
<div class="a" style="left:11px;top:703.1px;width:2px;height:1px;background:#444"></div>
<div class="a ui" style="left:6px;top:728.0px;width:14px;height:8px;line-height:8px;text-align:center;font-size:10px;color:#2a2a2a"><span style="display:inline-block;transform:rotate(-90deg)">17</span></div>
<div class="a" style="left:10px;top:712.6px;width:5px;height:1px;background:#444"></div>
<div class="a" style="left:11px;top:722.0px;width:2px;height:1px;background:#444"></div>
<div class="a" style="left:11px;top:741.0px;width:2px;height:1px;background:#444"></div>
<div class="a ui" style="left:6px;top:765.8px;width:14px;height:8px;line-height:8px;text-align:center;font-size:10px;color:#2a2a2a"><span style="display:inline-block;transform:rotate(-90deg)">18</span></div>
<div class="a" style="left:10px;top:750.4px;width:5px;height:1px;background:#444"></div>
<div class="a" style="left:11px;top:759.8px;width:2px;height:1px;background:#444"></div>
<div class="a" style="left:11px;top:778.8px;width:2px;height:1px;background:#444"></div>
<div class="a ui" style="left:6px;top:803.6px;width:14px;height:8px;line-height:8px;text-align:center;font-size:10px;color:#2a2a2a"><span style="display:inline-block;transform:rotate(-90deg)">19</span></div>
<div class="a" style="left:10px;top:788.2px;width:5px;height:1px;background:#444"></div>
<div class="a" style="left:11px;top:797.6px;width:2px;height:1px;background:#444"></div>
<div class="a" style="left:11px;top:816.5px;width:2px;height:1px;background:#444"></div>
<div class="a ui" style="left:6px;top:841.4px;width:14px;height:8px;line-height:8px;text-align:center;font-size:10px;color:#2a2a2a"><span style="display:inline-block;transform:rotate(-90deg)">20</span></div>
<div class="a" style="left:10px;top:826.0px;width:5px;height:1px;background:#444"></div>
<div class="a" style="left:11px;top:835.4px;width:2px;height:1px;background:#444"></div>
<div class="a" style="left:11px;top:854.4px;width:2px;height:1px;background:#444"></div>
<div class="a ui" style="left:6px;top:879.2px;width:14px;height:8px;line-height:8px;text-align:center;font-size:10px;color:#2a2a2a"><span style="display:inline-block;transform:rotate(-90deg)">21</span></div>
<div class="a" style="left:10px;top:863.8px;width:5px;height:1px;background:#444"></div>
<div class="a" style="left:11px;top:873.2px;width:2px;height:1px;background:#444"></div>
<div class="a" style="left:11px;top:892.1px;width:2px;height:1px;background:#444"></div>
<div class="a ui" style="left:6px;top:917.0px;width:14px;height:8px;line-height:8px;text-align:center;font-size:10px;color:#2a2a2a"><span style="display:inline-block;transform:rotate(-90deg)">22</span></div>
<div class="a" style="left:10px;top:901.6px;width:5px;height:1px;background:#444"></div>
<div class="a" style="left:11px;top:911.0px;width:2px;height:1px;background:#444"></div>
<div class="a" style="left:11px;top:930.0px;width:2px;height:1px;background:#444"></div>
<div class="a ui" style="left:6px;top:954.8px;width:14px;height:8px;line-height:8px;text-align:center;font-size:10px;color:#2a2a2a"><span style="display:inline-block;transform:rotate(-90deg)">23</span></div>
<div class="a" style="left:10px;top:939.4px;width:5px;height:1px;background:#444"></div>
<div class="a" style="left:11px;top:948.8px;width:2px;height:1px;background:#444"></div>
<div class="a" style="left:11px;top:967.8px;width:2px;height:1px;background:#444"></div></div>

<!-- scrollbar -->
<div class="a" style="left:1263px;top:138px;width:17px;height:834px;background:#dde1e8"></div>
<div id="scroll">
<div class="a" style="left:1263px;top:267px;width:16px;height:126px;border:1px solid #8c929a;border-radius:2px;background:linear-gradient(90deg,#f3f5f8,#e4e7ec 60%,#d9dde3)"></div>
<div class="a" style="left:1267px;top:326px;width:8px;height:1px;background:#6e747c;box-shadow:0 2px 0 #6e747c,0 4px 0 #6e747c,0 6px 0 #6e747c"></div>
<svg class="a" style="left:1266px;top:909px" width="10" height="6"><path d="M0 0H9L4.5 5Z" fill="#555"/></svg>
<div class="a" style="left:1263px;top:920px;width:17px;height:1px;background:#c3c8d0"></div>
<svg class="a" style="left:1266px;top:924px" width="10" height="8"><path d="M1 4L4.5 0.5L8 4ZM1 7.5L4.5 4L8 7.5Z" fill="#444"/><path d="M1 7.5H8" stroke="#444"/></svg>
<div class="a" style="left:1266px;top:941px;width:8px;height:8px;border:1px solid #777;border-radius:50%;background:#e4e6ea"></div>
<svg class="a" style="left:1266px;top:959px" width="10" height="8"><path d="M1 0.5H8M1 1L4.5 4.5L8 1ZM1 4.5L4.5 8L8 4.5Z" fill="#444" stroke="#444" stroke-width="0.5"/></svg>
</div>


<!-- ============ DROPDOWN MENU ============ -->
<div class="a" style="left:296px;top:123px;width:261px;height:96px;background:rgba(0,0,0,.10);border-radius:2px;filter:blur(1.5px)"></div>
<div class="a" style="left:293px;top:120px;width:261px;height:96px;background:#fff;border:1px solid #a7abb0;border-radius:2px"></div>

<div class="a" style="left:319px;top:121px;width:1px;height:94px;background:#e2e4e7"></div>
<div class="a ui" style="left:328px;top:127px;color:#3b3b3b;font-size:11.4px"><u>Н</u>ет</div>
<div class="a" style="left:295px;top:144px;width:257px;height:22px;border:1px solid #f0c64e;border-radius:2px;background:linear-gradient(#fffaea,#fde9a6 25%,#fce08a 55%,#fde49a 80%,#fff1c8)"></div>
<div class="a" style="left:297px;top:145px;width:20px;height:20px;border:1px solid #f29536;border-radius:3px;background:linear-gradient(#fdf0c8,#fbe6ae)"></div>
<svg class="a" style="left:302px;top:148px" width="11" height="13" viewBox="0 0 11 13"><path d="M1 6.5L3.8 11.5L9.8 1.5" fill="none" stroke="#232f7a" stroke-width="1.6" stroke-linejoin="round"/></svg>
<div class="a ui" style="left:328px;top:149px;color:#3b3b3b;font-size:11.4px"><u>А</u>вто</div>
<div class="a ui" style="left:328px;top:171px;color:#3b3b3b;font-size:11.4px"><u>Р</u>учная</div>
<div class="a" style="left:327px;top:189px;width:226px;height:0;border-top:1px dashed #c5c5c5"></div>
<svg class="a" style="left:298px;top:195px" width="17" height="16" viewBox="0 0 17 16"><text x="0" y="13.5" font-family="Liberation Serif" font-weight="bold" font-size="11" fill="#333">b</text><text x="6" y="13.5" font-family="Liberation Serif" font-weight="bold" font-size="11" fill="#333">c</text><text x="6" y="7.5" font-family="Liberation Serif" font-weight="bold" font-size="10" fill="#333">a</text><path d="M12 4.5H15.5" stroke="#333" stroke-width="1.1"/></svg>
<div class="a ui" style="left:328px;top:197px;color:#3b3b3b;font-size:11.4px"><u>П</u>араметры расстановки переносов...</div>

<!-- tooltip -->
<div class="a" style="left:405px;top:174px;width:292px;height:22px;background:rgba(0,0,0,.12);border-radius:3px;filter:blur(1.5px)"></div>
<div class="a" style="left:402px;top:171px;width:293px;height:23px;border:1px solid #767676;border-radius:3px;background:linear-gradient(#ffffff,#e4e5f0)"></div>
<div class="a ui" style="left:407px;top:176px;color:#4c4c4c;font-size:11.7px">Включение автоматической расстановки переносов</div>

<!-- ============ STATUS BAR ============ -->
<div class="a" style="left:0;top:972px;width:1280px;height:22px;background:linear-gradient(#eceef1,#dcdfe4 60%,#d3d7dc);border-top:1px solid #a3a8ae"></div>
<div id="status">
<div class="a ui" style="left:8px;top:977px;color:#3b3b3b;font-size:11.2px">Страница: 2 из 5</div>
<div class="a" style="left:105px;top:975px;width:1px;height:18px;background:#b4b9c0;box-shadow:1px 0 0 #fff"></div>
<div class="a ui" style="left:116px;top:977px;color:#3b3b3b;font-size:11.1px">Число слов: 48/1 087</div>
<div class="a" style="left:232px;top:975px;width:1px;height:18px;background:#b4b9c0;box-shadow:1px 0 0 #fff"></div>
<svg class="a" style="left:240px;top:974px" width="18" height="16" viewBox="0 0 18 16">
 <path d="M1 10L8 6L16 10L9 14Z" fill="#fff" stroke="#4a6fb5" stroke-width="1"/>
 <path d="M1 10L9 14L16 10V11.5L9 15.5L1 11.5Z" fill="#3b62b3"/>
 <path d="M10 1L16 8M16 1L10 8" stroke="#e0281e" stroke-width="2"/>
</svg>
<div class="a ui" style="left:275px;top:977px;color:#3b3b3b;font-size:11.4px">русский</div>
<div class="a" style="left:326px;top:975px;width:1px;height:18px;background:#b4b9c0;box-shadow:1px 0 0 #fff"></div>
<div class="a" style="left:1002px;top:975px;width:1px;height:18px;background:#b4b9c0;box-shadow:1px 0 0 #fff"></div>
<div class="a" style="left:1008px;top:974px;width:18px;height:18px;border:1px solid #e5b44c;border-radius:2px;background:linear-gradient(#fff2c4,#ffd975)"></div>
<svg class="a" style="left:1010px;top:977px" width="14" height="13" viewBox="0 0 14 13"><rect x="1.5" y="0.5" width="11" height="11" fill="#fff" stroke="#3a3a3a"/><path d="M3 3.5H11M3 5.5H11M3 7.5H11M3 9.5H11" stroke="#555"/></svg>
<svg class="a" style="left:1030px;top:977px" width="12" height="14" viewBox="0 0 12 14"><path d="M0.5 0.5H5.5V11.5H0.5ZM6.5 0.5H11.5V11.5H6.5Z" fill="#fff" stroke="#555"/><path d="M2 3.5H4.5M2 5.5H4.5M2 7.5H4.5M7.5 3.5H10M7.5 5.5H10M7.5 7.5H10" stroke="#777"/><path d="M5 12L6 13.5L7 12" stroke="#555" fill="none"/></svg>
<svg class="a" style="left:1047px;top:977px" width="13" height="14" viewBox="0 0 13 14"><rect x="0.5" y="0.5" width="10" height="9" fill="#fff" stroke="#555"/><path d="M2 2.5H9M2 4.5H9M2 6.5H6" stroke="#777"/><circle cx="9.5" cy="10.5" r="3" fill="#2f86d6"/><path d="M7.5 10Q9 9 10 10.5Q11 12 12 11" stroke="#4caf50" stroke-width="1.3" fill="none"/></svg>
<svg class="a" style="left:1067px;top:978px" width="10" height="11" viewBox="0 0 10 11"><path d="M3 0.5H10M4 3.5H10M4 6.5H10M3 9.5H10" stroke="#666"/><path d="M0 0.5H1M1 3.5H2M1 6.5H2M0 9.5H1" stroke="#888"/></svg>
<svg class="a" style="left:1085px;top:978px" width="10" height="11" viewBox="0 0 10 11"><path d="M0 0.5H10M0 2.5H10M0 4.5H10M0 6.5H10M0 8.5H10M0 10.5H10" stroke="#555"/></svg>
<div class="a ui" style="left:1108px;top:978px;color:#3b3b3b;font-size:11.4px">100%</div>
<div class="a" style="left:1144px;top:975px;width:16px;height:16px;border:1px solid #8d939b;border-radius:50%;background:linear-gradient(#fdfdfd,#e3e6ea)"></div>
<div class="a" style="left:1148px;top:982px;width:8px;height:2px;background:#333"></div>
<div class="a" style="left:1161px;top:982px;width:99px;height:1px;background:#9ea3aa;box-shadow:0 1px 0 #fff"></div>
<svg class="a" style="left:1205px;top:975px" width="11" height="14" viewBox="0 0 11 14"><path d="M1 0.5H10V8.5L5.5 13L1 8.5Z" fill="#f6f7f9" stroke="#6f757d"/></svg>
<div class="a" style="left:1260px;top:975px;width:16px;height:16px;border:1px solid #8d939b;border-radius:50%;background:linear-gradient(#fdfdfd,#e3e6ea)"></div>
<div class="a" style="left:1264px;top:982px;width:8px;height:2px;background:#333"></div>
<div class="a" style="left:1267px;top:979px;width:2px;height:8px;background:#333"></div>
</div>

<!-- ============ TASKBAR ============ -->
<div class="a" style="left:0;top:994px;width:1280px;height:30px;background:linear-gradient(#3d8cf3,#2a64de 12%,#2459d7 50%,#2253cf 90%,#1a44b8)"></div>
<div id="taskbar">
<div class="a" style="left:0;top:994px;width:96px;height:30px;border-radius:0 12px 12px 0;background:linear-gradient(#5fb95f,#3a9a3a 15%,#339133 60%,#2c7f2c 90%,#287428);box-shadow:inset -2px 0 3px rgba(0,0,0,.3)"></div>
<svg class="a" style="left:10px;top:1000px" width="20" height="19" viewBox="0 0 20 19">
 <path d="M2 3Q5 1 9 2.5L8 8Q4.5 7 1.5 8.5Z" fill="#f25022"/>
 <path d="M10.5 3Q14 5 18.5 2.5L17.5 8.5Q13.5 10.5 9.5 8.5Z" fill="#7fba00"/>
 <path d="M1.5 10Q4.5 8.5 8 9.5L7 15.5Q4 14.5 0.5 16Z" fill="#00a4ef"/>
 <path d="M9.3 10Q13.5 12 17.3 10L16.3 16Q12.5 18 8.3 16Z" fill="#ffb900"/>
</svg>
<div class="a ui" style="left:35px;top:999px;color:#fff;font-size:17px;font-weight:bold;font-style:italic;text-shadow:1px 1px 1px rgba(0,0,0,.5)">пуск</div>
<svg class="a" style="left:108px;top:1001px" width="16" height="16" viewBox="0 0 16 16"><circle cx="8.5" cy="7.5" r="6.5" fill="#3a6fc4"/><circle cx="9" cy="6.5" r="4" fill="#5fa0e8"/><path d="M2 5Q0 11 5 14.5Q10 17 14 12.5Q15.5 10.5 15 8.5Q13 12.5 9 12Q4.5 11 5 6.5Q3.5 7 2 5Z" fill="#e8681c"/><path d="M5 3Q8 0.5 12 2Q9 2 8 4Z" fill="#f4a51c"/></svg>
<svg class="a" style="left:131px;top:1000px" width="17" height="17" viewBox="0 0 17 17"><ellipse cx="8.5" cy="8" rx="6" ry="7" fill="#e8e8e8" stroke="#8a8a8a" stroke-width="0.8"/><path d="M4 7Q8.5 10 13 7L13 9Q8.5 12 4 9Z" fill="#333"/><rect x="1" y="7" width="3" height="5" rx="1.5" fill="#555"/><rect x="13" y="7" width="3" height="5" rx="1.5" fill="#555"/></svg>
<svg class="a" style="left:154px;top:1000px" width="17" height="17" viewBox="0 0 17 17"><circle cx="8.5" cy="8.5" r="7.5" fill="#fdfdfd" stroke="#d0d0d0" stroke-width="0.6"/><path d="M5 3.5L8.5 9L12 3.5M8.5 9V14.5" stroke="#e2231a" stroke-width="2.2" fill="none"/></svg>
<div class="a ui" style="left:182px;top:998px;color:#c6d8f8;font-size:11px">&#187;</div>
<div class="a" style="left:198px;top:998px;width:158px;height:23px;border-radius:3px;background:linear-gradient(#4b8cf5,#3a7cef 15%,#3677ea 80%,#2e66d4);border:1px solid #1f4fbf;box-shadow:inset 1px 1px 1px rgba(255,255,255,.35)"></div>
<svg class="a" style="left:207px;top:1002px" width="17" height="15" viewBox="0 0 17 15"><path d="M0.5 2.5H6L7.5 4H15.5V13.5H0.5Z" fill="#e8c25a" stroke="#a27c1e" stroke-width="0.8"/><path d="M1 6H16L15 13.5H0.5Z" fill="#fbe08a" stroke="#b58b25" stroke-width="0.6"/></svg>
<div class="a ui" style="left:226px;top:1004px;color:#fff;font-size:11px;-webkit-text-stroke:0">верд</div>
<div class="a" style="left:358px;top:998px;width:158px;height:23px;border-radius:3px;background:linear-gradient(#4b8cf5,#3a7cef 15%,#3677ea 80%,#2e66d4);border:1px solid #1f4fbf;box-shadow:inset 1px 1px 1px rgba(255,255,255,.35)"></div>
<svg class="a" style="left:367px;top:1002px" width="16" height="16" viewBox="0 0 16 16"><rect x="0.5" y="0.5" width="15" height="15" fill="#e86a33" stroke="#b23f10"/><rect x="2" y="2" width="12" height="12" fill="#f4a276"/><text x="8" y="13" font-family="Liberation Sans" font-weight="bold" font-size="12" fill="#fff" text-anchor="middle">P</text></svg>
<div class="a ui" style="left:386px;top:1004px;color:#fff;font-size:11px;-webkit-text-stroke:0">занятие 1 - Microsoft...</div>
<div class="a" style="left:518px;top:998px;width:158px;height:23px;border-radius:3px;background:linear-gradient(#4b8cf5,#3a7cef 15%,#3677ea 80%,#2e66d4);border:1px solid #1f4fbf;box-shadow:inset 1px 1px 1px rgba(255,255,255,.35)"></div>
<svg class="a" style="left:527px;top:1002px" width="16" height="16" viewBox="0 0 17 17"><rect x="0.5" y="0.5" width="16" height="16" fill="#fff" stroke="#3a63a8"/><rect x="1.5" y="1.5" width="14" height="14" fill="#e6eef9"/><path d="M1.5 3.5L4 14H6.5L8.5 7L10.5 14H13L15.5 3.5H13.3L11.7 10.5L9.7 3.5H7.3L5.3 10.5L3.7 3.5Z" fill="#1f55b8"/></svg>
<div class="a ui" style="left:546px;top:1004px;color:#fff;font-size:11px;-webkit-text-stroke:0">Практическое занят...</div>
<div class="a" style="left:678px;top:998px;width:158px;height:23px;border-radius:3px;background:linear-gradient(#4b8cf5,#3a7cef 15%,#3677ea 80%,#2e66d4);border:1px solid #1f4fbf;box-shadow:inset 1px 1px 1px rgba(255,255,255,.35)"></div>
<svg class="a" style="left:687px;top:1002px" width="16" height="16" viewBox="0 0 17 17"><rect x="0.5" y="0.5" width="16" height="16" fill="#fff" stroke="#3a63a8"/><rect x="1.5" y="1.5" width="14" height="14" fill="#e6eef9"/><path d="M1.5 3.5L4 14H6.5L8.5 7L10.5 14H13L15.5 3.5H13.3L11.7 10.5L9.7 3.5H7.3L5.3 10.5L3.7 3.5Z" fill="#1f55b8"/></svg>
<div class="a ui" style="left:706px;top:1004px;color:#fff;font-size:11px;-webkit-text-stroke:0">Внутренние требов...</div>
<div class="a" style="left:838px;top:998px;width:158px;height:23px;border-radius:3px;background:linear-gradient(#1b46ad,#1e4fc0 20%,#2150c4 80%,#1c47b2);border:1px solid #163b91;box-shadow:inset 1px 1px 2px rgba(0,0,0,.35)"></div>
<svg class="a" style="left:847px;top:1002px" width="16" height="16" viewBox="0 0 17 17"><rect x="0.5" y="0.5" width="16" height="16" fill="#fff" stroke="#3a63a8"/><rect x="1.5" y="1.5" width="14" height="14" fill="#e6eef9"/><path d="M1.5 3.5L4 14H6.5L8.5 7L10.5 14H13L15.5 3.5H13.3L11.7 10.5L9.7 3.5H7.3L5.3 10.5L3.7 3.5Z" fill="#1f55b8"/></svg>
<div class="a ui" style="left:866px;top:1004px;color:#fff;font-size:11px;-webkit-text-stroke:0">Копия Внутренние т...</div>
<div class="a" style="left:1187px;top:994px;width:93px;height:30px;background:linear-gradient(#3ec0f8,#15a2ea 12%,#0f9be6 60%,#0c8fd9 90%,#0b7fcb);border-left:1px solid #0e5eb8"></div>
<div class="a" style="left:1152px;top:1001px;width:16px;height:16px;background:#3b70d6"></div>
<div class="a ui" style="left:1152px;top:1003px;color:#fff;font-size:11.4px">RU</div>
<div class="a" style="left:1179px;top:1001px;width:17px;height:17px;border-radius:50%;background:radial-gradient(circle at 40% 35%,#8fd0ff,#1a7ee0);border:1px solid #0b4fa8"></div>
<svg class="a" style="left:1183px;top:1005px" width="9" height="9"><path d="M6 1L2.5 4.5L6 8" stroke="#fff" stroke-width="2" fill="none"/></svg>
<svg class="a" style="left:1197px;top:1002px" width="17" height="16" viewBox="0 0 17 16"><rect x="6" y="1" width="9" height="7" fill="#4a5a9a" stroke="#2a2f60"/><rect x="1" y="6" width="9" height="7" fill="#4a5a9a" stroke="#2a2f60"/><path d="M3 14H9M10 9H15" stroke="#ccd" stroke-width="1.5"/></svg>
<svg class="a" style="left:1216px;top:1002px" width="17" height="15" viewBox="0 0 17 15"><path d="M8.5 0.5L16.5 14.5H0.5Z" fill="#e2261b" stroke="#a81510" stroke-width="0.6"/><rect x="7.6" y="4.5" width="1.8" height="5.5" fill="#fff"/><rect x="7.6" y="11" width="1.8" height="1.8" fill="#fff"/></svg>
<div class="a ui" style="left:1240px;top:1003px;color:#fff;font-size:11.4px">15:11</div>
</div>

</body></html>
